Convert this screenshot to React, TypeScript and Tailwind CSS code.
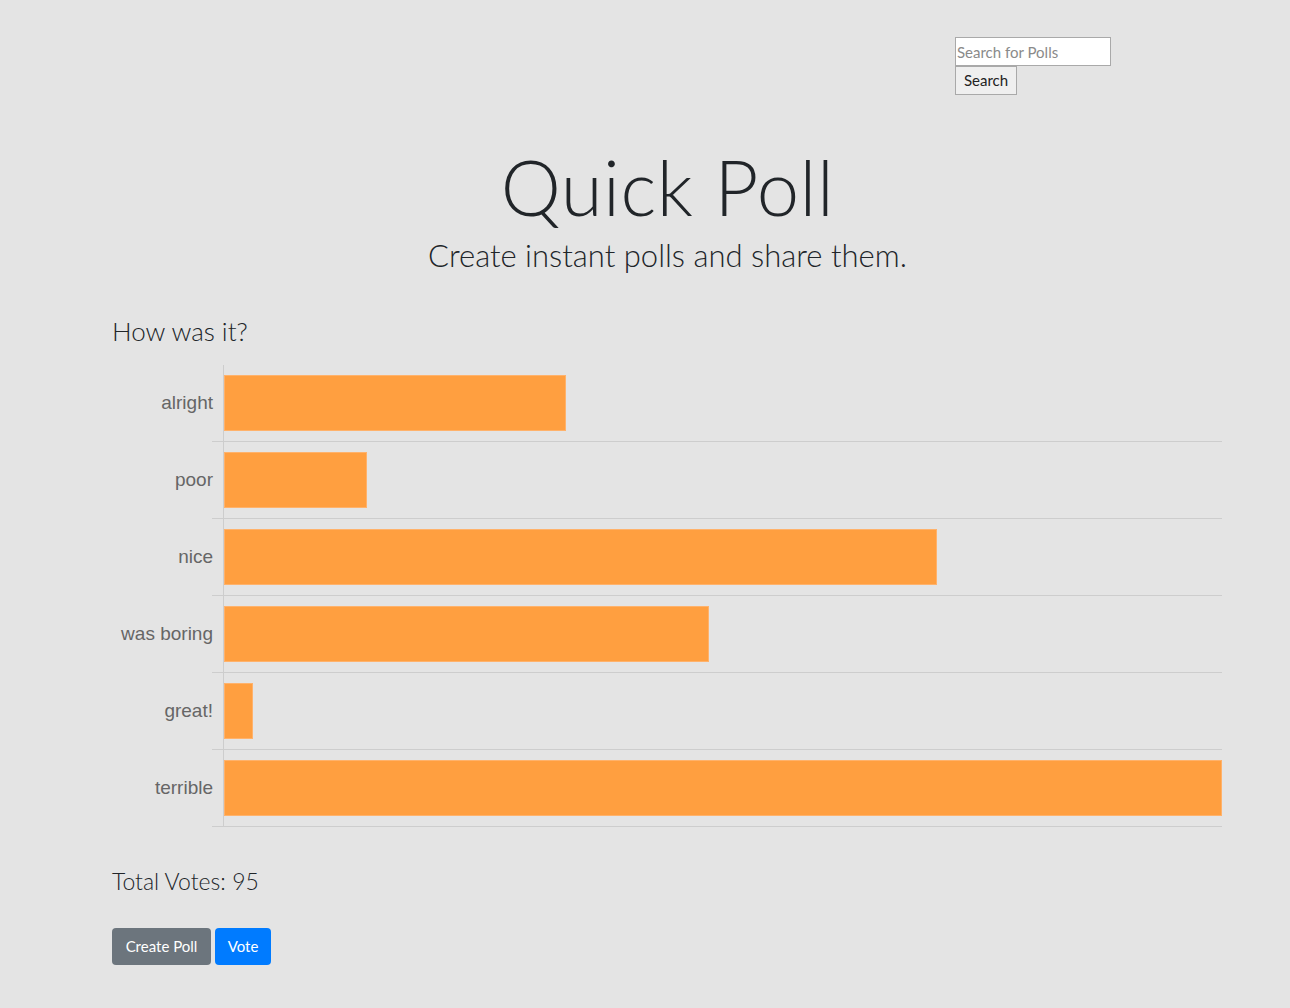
import React from "react";

const data = [
  { label: "alright", value: 12 },
  { label: "poor", value: 5 },
  { label: "nice", value: 25 },
  { label: "was boring", value: 17 },
  { label: "great!", value: 1 },
  { label: "terrible", value: 35 },
];

export default function App() {
  const max = 35;
  const total = data.reduce((s, d) => s + d.value, 0);
  return (
    <div className="min-h-[1008px] w-full bg-[#e4e4e4] text-[#212529]" style={{ fontFamily: "Lato, 'Open Sans', sans-serif" }}>
      <div className="flex flex-col items-start pl-[955px] pt-[37px]">
        <input
          placeholder="Search for Polls"
          className="h-[29px] w-[156px] border border-[#a9a9a9] bg-white px-[1px] text-[15px] text-[#333] placeholder:text-[#8a8a8a] outline-none"
        />
        <button className="h-[29px] w-[62px] border border-[#a9a9a9] bg-[#efefef] text-[15px] text-[#222]">
          Search
        </button>
      </div>

      <div className="flex flex-col items-center pl-[45px]">
        <h1 className="mt-[46px] text-[76px] font-light leading-[92px] tracking-[0.5px]">Quick Poll</h1>
        <p className="mt-[2px] text-[31px] font-light leading-[40px]">Create instant polls and share them.</p>
      </div>

      <div className="ml-[112px] w-[1110px]">
        <h4 className="mt-[40px] text-[26px] font-light leading-[32px]">How was it?</h4>
        <div className="mt-[18px] flex flex-col">
          {data.map((d) => (
            <div key={d.label} className="flex h-[77px]">
              <div
                className="flex w-[100px] items-center justify-end text-[19px] text-[#666]"
                style={{ fontFamily: "'Liberation Sans', Arial, sans-serif" }}
              >
                <span className="mr-[-1px]">{d.label}</span>
              </div>
              <div className="w-[11px] border-b border-[#cdcdcd]" />
              <div className="w-[999px] border-b border-l border-[#cdcdcd] pt-[10px]">
                <div
                  className="h-[56px] border border-[#ffb26b] bg-[#ff9f40]"
                  style={{ width: `${(d.value / max) * 998}px` }}
                />
              </div>
            </div>
          ))}
        </div>
        <div className="mt-[39px] text-[23px] font-light leading-[30px]">Total Votes: {total}</div>
        <div className="mt-[32px] flex gap-[4px]">
          <button className="h-[37px] w-[99px] rounded-[4px] bg-[#6c757d] text-[15px] text-white">Create Poll</button>
          <button className="h-[37px] w-[56px] rounded-[4px] bg-[#007bff] text-[15px] text-white">Vote</button>
        </div>
      </div>
    </div>
  );
}
